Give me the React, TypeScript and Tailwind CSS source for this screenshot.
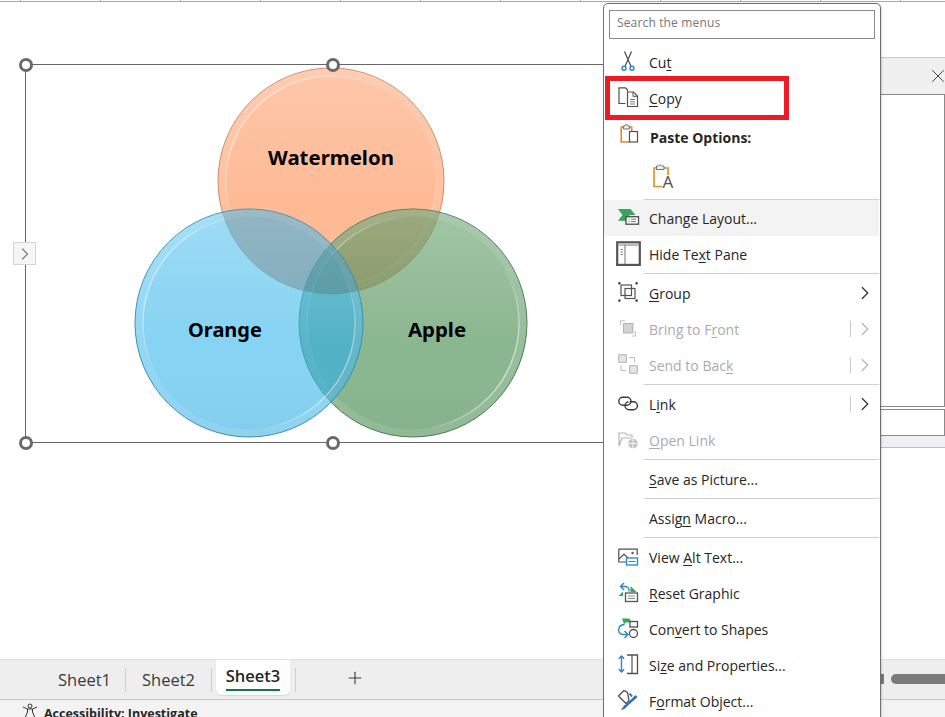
import React from "react";
import { X, Plus, ChevronRight } from "lucide-react";

type Item = {
  label?: string;
  icon?: React.ReactNode;
  off?: boolean;
  arrow?: boolean;
  split?: boolean;
  hover?: boolean;
  sep?: boolean;
};

const Svg = ({ children }: { children: React.ReactNode }) => (
  <svg className="w-6 h-6 shrink-0 overflow-visible" viewBox="0 0 24 24" fill="none">
    {children}
  </svg>
);

const CutIcon = () => (
  <Svg>
    <path d="M8.5 1.5 15 16.5M15.5 1.5 9 16.5" stroke="#4a4a4a" strokeWidth="1.2" />
    <circle cx="8" cy="18.3" r="2" stroke="#2a84d2" strokeWidth="1.4" />
    <circle cx="16" cy="18.3" r="2" stroke="#2a84d2" strokeWidth="1.4" />
  </Svg>
);

const CopyIcon = () => (
  <Svg>
    <path d="M9.5 17.5H3V1.800h6.500l2 2v1.700" stroke="#505050" strokeWidth="1.2" />
    <path d="M11.500 6h6l4 4v10.500h-10z" stroke="#505050" strokeWidth="1.2" fill="#fff" />
    <path d="M17 6v4.300h4.500" stroke="#505050" />
    <path d="M14 13.500h5M14 15.800h5M14 18h5" stroke="#808080" />
  </Svg>
);

const PasteIcon = () => (
  <Svg>
    <path d="M8 2H5.200v15h8M13 2h2.700v4" stroke="#e58a2c" strokeWidth="1.6" />
    <path d="M7.500 4V1H9a1.500 1.500 0 0 1 3 0h1.500v3z" stroke="#707070" fill="#eee" />
    <rect x="13.500" y="6.500" width="8" height="10.500" stroke="#505050" strokeWidth="1.2" fill="#fff" />
  </Svg>
);

const PasteTextIcon = () => (
  <Svg>
    <path d="M7 2H4v18.500h8M13 2h5v7" stroke="#e58a2c" strokeWidth="1.6" />
    <path d="M6.500 3.500V0h2a2 2 0 0 1 3.500 0h2v3.500z" stroke="#707070" fill="#eee" />
    <text x="12.500" y="22" fontSize="17" fill="#505050" className="font-['Open_Sans',sans-serif]">A</text>
  </Svg>
);

const LayoutIcon = () => (
  <Svg>
    <path d="M2 3h12.500l5 6h-6L12 14.700H2l4.500-5.800z" fill="#39a45a" />
    <rect x="10" y="10.700" width="12.500" height="7.500" fill="#fff" stroke="#555" strokeWidth="1.4" />
    <path d="M12.500 13.200h1.200M12.500 15.600h1.200M15 13.200h5M15 15.600h5" stroke="#777" />
  </Svg>
);

const PaneIcon = () => (
  <Svg>
    <rect x="1.200" y="0.300" width="22.600" height="22.600" fill="#fff" stroke="#555" strokeWidth="2.200" />
    <path d="M2.500 3h20" stroke="#aaa" strokeWidth="1.600" />
    <path d="M9 3v19" stroke="#777" />
    <path d="M4.500 7.500h2.500M4.500 10h2.500M4.500 12.500h2.500" stroke="#888" />
  </Svg>
);

const GroupIcon = () => (
  <Svg>
    <g fill="#333">
      <rect x="2.300" y="1.200" width="2.200" height="2.200" />
      <rect x="19.500" y="1.200" width="2.200" height="2.200" />
      <rect x="2.300" y="18.500" width="2.200" height="2.200" />
      <rect x="19.500" y="18.500" width="2.200" height="2.200" />
    </g>
    <rect x="5" y="4" width="10.500" height="10.500" stroke="#555" strokeWidth="1.200" />
    <rect x="9" y="7.500" width="10" height="10" stroke="#555" strokeWidth="1.200" />
  </Svg>
);

const FrontIcon = () => (
  <Svg>
    <path d="M4.500 8V3.800H9M15.500 19h4v-4.500" stroke="#bdbdbd" />
    <rect x="7.500" y="6.500" width="9.500" height="9.500" fill="#d2d2d2" stroke="#b5b5b5" />
  </Svg>
);

const BackIcon = () => (
  <Svg>
    <rect x="2.800" y="1.800" width="7.500" height="7.500" fill="#e6e6e6" stroke="#b0b0b0" />
    <rect x="13.700" y="12.700" width="7.500" height="7.500" fill="#e6e6e6" stroke="#b0b0b0" />
    <path d="M13 4.500h5.500v5M5 12v5.500h5" stroke="#bdbdbd" />
  </Svg>
);

const LinkIcon = () => (
  <Svg>
    <rect x="2.800" y="5.300" width="12.200" height="8" rx="4" stroke="#3a3a3a" strokeWidth="1.400" />
    <rect x="9" y="9.700" width="12.400" height="8" rx="4" stroke="#3a3a3a" strokeWidth="1.400" />
    <path d="M13 8.500v1.800" stroke="#fff" strokeWidth="1.600" />
  </Svg>
);

const OpenLinkIcon = () => (
  <Svg>
    <path d="M3 18V5h6l2 2h5v3M3 18l3-8h9" stroke="#b5b5b5" strokeWidth="1.200" />
    <circle cx="17" cy="15.500" r="4.800" fill="#c4c4c4" />
    <path d="M12.500 15.500h9M17 11v9" stroke="#fff" strokeWidth="0.800" />
  </Svg>
);

const AltIcon = () => (
  <Svg>
    <path d="M10 17H2.800V4.200h18.400V10" stroke="#505050" strokeWidth="1.200" />
    <path d="M3 14l5-5 6 6" stroke="#505050" strokeWidth="1.200" />
    <circle cx="16.500" cy="8" r="1.200" fill="#505050" />
    <rect x="10.500" y="13" width="11" height="7" fill="#fff" stroke="#2a84d2" strokeWidth="1.300" />
    <path d="M12.500 16.500h7" stroke="#2a84d2" />
  </Svg>
);

const ResetIcon = () => (
  <Svg>
    <path d="M8 2 4.500 5.500 8 9M5 5.500h4a4 4 0 0 1 4 4v1" stroke="#2a84d2" strokeWidth="1.400" />
    <path d="M2.500 15 7 10.500V15z" fill="#39a45a" />
    <path d="M14.500 5l6 6h-6z" fill="#39a45a" />
    <rect x="9.500" y="12" width="12" height="8.500" fill="#fff" stroke="#555" strokeWidth="1.300" />
    <path d="M12 15h7M12 17.500h7" stroke="#888" />
  </Svg>
);

const ConvertIcon = () => (
  <Svg>
    <path d="M6 1.500h7.500l2 4h-6l-1.500 2z" fill="#39a45a" />
    <rect x="14" y="4.500" width="7.500" height="5.500" fill="#fff" stroke="#505050" strokeWidth="1.300" />
    <circle cx="17.500" cy="16.500" r="4" fill="#fff" stroke="#505050" strokeWidth="1.300" />
    <path d="M8.500 7.500C1 8 1 17 7 17.500h4M8.500 14l3.500 3.500L8.500 21" stroke="#2a84d2" strokeWidth="1.400" />
  </Svg>
);

const SizeIcon = () => (
  <Svg>
    <path d="M5.500 3v16M2.800 5.800 5.500 3l2.700 2.800M2.800 16.200 5.500 19l2.700-2.800" stroke="#2a84d2" strokeWidth="1.400" />
    <path d="M11 2h10.500v18.500H11" stroke="#505050" strokeWidth="1.300" fill="#fff" />
    <path d="M16 2v18.500" stroke="#505050" strokeWidth="1.200" />
  </Svg>
);

const FormatIcon = () => (
  <Svg>
    <path d="M8 1.500 2.500 7l7.500 7.500 3-3-1.500-8z" stroke="#505050" strokeWidth="1.300" fill="#fff" />
    <path d="M13.500 4.500l2.500 3" stroke="#2a84d2" strokeWidth="2" />
    <path d="M21.500 8 12 16.500l-2 2c-1 1.500-3 2.500-5.500 2 2-1 2.500-2.500 3.500-4l2.500-1.500L19.500 6z" fill="#2a6fc0" />
  </Svg>
);

const items: Item[] = [
  { sep: true },
  { label: "Chan_ge Layout...", icon: <LayoutIcon />, hover: true },
  { label: "Hide Te_xt Pane", icon: <PaneIcon /> },
  { sep: true },
  { label: "_Group", icon: <GroupIcon />, arrow: true },
  { label: "Bring to F_ront", icon: <FrontIcon />, off: true, arrow: true, split: true },
  { label: "Send to Bac_k", icon: <BackIcon />, off: true, arrow: true, split: true },
  { sep: true },
  { label: "L_ink", icon: <LinkIcon />, arrow: true, split: true },
  { label: "_Open Link", icon: <OpenLinkIcon />, off: true },
  { sep: true },
  { label: "_Save as Picture..." },
  { sep: true },
  { label: "Assig_n Macro..." },
  { sep: true },
  { label: "View _Alt Text...", icon: <AltIcon /> },
  { label: "_Reset Graphic", icon: <ResetIcon /> },
  { label: "Con_vert to Shapes", icon: <ConvertIcon /> },
  { label: "Si_ze and Properties...", icon: <SizeIcon /> },
  { label: "F_ormat Object...", icon: <FormatIcon /> },
];

const Label = ({ text }: { text: string }) => {
  const [a, b] = text.split("_");
  return (
    <span>
      {a}
      <u className="underline-offset-2">{b[0]}</u>
      {b.slice(1)}
    </span>
  );
};

const Row = ({ item }: { item: Item }) => (
  <div
    className={`h-9 shrink-0 flex items-center mr-px ${item.hover ? "bg-[#f3f3f3]" : ""} ${
      item.off ? "text-[#ababab]" : "text-[#262626]"
    }`}
  >
    <div className="w-[45px] pl-3 shrink-0">{item.icon}</div>
    <Label text={item.label!} />
    {item.arrow && (
      <div className="ml-auto flex items-center pr-[3px]">
        {item.split && <div className="w-px h-4 bg-[#c8c8c8] mr-[3px]" />}
        <ChevronRight className={`w-[22px] h-[22px] ${item.off ? "text-[#b5b5b5]" : "text-[#333]"}`} strokeWidth={1.3} />
      </div>
    )}
  </div>
);

const ContextMenu = () => (
  <div className="absolute left-[603px] top-[3px] w-[278px] h-[730px] bg-white border border-[#707070] rounded-t-[5px] flex flex-col font-['Open_Sans',sans-serif] text-[14px] shadow-[1px_0_2px_rgba(0,0,0,0.15)]">
    <div className="mt-[6px] mx-[5px] mb-[5px] h-[29px] shrink-0 border border-[#8a8a8a] flex items-center pl-[7px] pb-[3px] text-[12px] tracking-[0.15px] text-[#767676]">
      Search the menus
    </div>
    <Row item={{ label: "Cu_t", icon: <CutIcon /> }} />
    <Row item={{ label: "_Copy", icon: <CopyIcon /> }} />
    <div className="h-[41px] shrink-0 flex items-center font-bold text-[#262626] pt-px">
      <div className="w-[46px] pl-3 shrink-0">
        <PasteIcon />
      </div>
      Paste Options:
    </div>
    <div className="h-[41px] shrink-0 pl-[46px] flex items-center">
      <PasteTextIcon />
    </div>
    {items.map((item, i) =>
      item.sep ? (
        <div key={i} className={`${i === 0 ? "h-[2px] items-end" : "h-[3px] items-center"} shrink-0 flex pl-10 mr-px`}>
          <div className="h-px w-full bg-[#d0d0d0]" />
        </div>
      ) : (
        <Row key={i} item={item} />
      )
    )}
    <div className="absolute left-[1px] top-[72px] w-[184px] h-[44px] border-[5px] border-[#ed1c24]" />
  </div>
);

const Bubble = ({ cx, cy, r, fill, rim, edge }: { cx: number; cy: number; r: number; fill: string; rim: string; edge: string }) => (
  <g>
    <circle cx={cx} cy={cy} r={r} fill={fill} fillOpacity="0.65" stroke={edge} strokeWidth="1" />
    <circle cx={cx} cy={cy} r={r} fill="url(#sheen)" />
    <circle cx={cx} cy={cy} r={r - 4} fill="none" stroke="#ffffff" strokeOpacity="0.1" strokeWidth="7" />
    <circle cx={cx} cy={cy} r={r - 8} fill="none" stroke={`url(#${rim})`} strokeWidth="1.4" />
  </g>
);

const Venn = () => (
  <svg className="absolute left-[-26px] top-[-65px] w-[620px] h-[460px] overflow-visible" viewBox="0 0 620 460">
    <defs>
      <linearGradient id="sheen" x1="0" y1="0" x2="0" y2="1">
        <stop offset="0" stopColor="#fff" stopOpacity="0.2" />
        <stop offset="0.6" stopColor="#fff" stopOpacity="0" />
        <stop offset="1" stopColor="#000" stopOpacity="0.03" />
      </linearGradient>
      <linearGradient id="rimA" x1="0" y1="0" x2="1" y2="1">
        <stop offset="0" stopColor="#fff" stopOpacity="0.85" />
        <stop offset="0.4" stopColor="#fff" stopOpacity="0" />
        <stop offset="0.7" stopColor="#fff" stopOpacity="0" />
        <stop offset="1" stopColor="#fff" stopOpacity="0.7" />
      </linearGradient>
      <linearGradient id="rimB" x1="0" y1="0.2" x2="1" y2="0.7">
        <stop offset="0" stopColor="#fff" stopOpacity="0.65" />
        <stop offset="0.3" stopColor="#fff" stopOpacity="0" />
        <stop offset="0.75" stopColor="#fff" stopOpacity="0" />
        <stop offset="1" stopColor="#fff" stopOpacity="0.65" />
      </linearGradient>
      <clipPath id="clipTop">
        <circle cx="331" cy="181" r="113" />
      </clipPath>
      <clipPath id="clipLeft">
        <circle cx="249" cy="323" r="114" />
      </clipPath>
    </defs>
    <Bubble cx={331} cy={181} r={113} fill="#fc955c" rim="rimA" edge="#c98a6a" />
    <Bubble cx={413} cy={323} r={114} fill="#4b9053" rim="rimB" edge="#4d7a55" />
    <Bubble cx={249} cy={323} r={114} fill="#45bced" rim="rimB" edge="#3f8fb0" />
    <g clipPath="url(#clipTop)">
      <circle cx="249" cy="323" r="114" fill="#5a5a5a" fillOpacity="0.16" />
      <circle cx="413" cy="323" r="114" fill="#6a5a30" fillOpacity="0.1" />
    </g>
    <g clipPath="url(#clipLeft)">
      <circle cx="413" cy="323" r="114" fill="#1c8aa5" fillOpacity="0.14" />
    </g>
    <g className="font-['Noto_Sans',sans-serif] font-bold" fill="#000" textAnchor="middle">
      <text x="331" y="165" fontSize="20.400">Watermelon</text>
      <text x="225" y="337" fontSize="20">Orange</text>
      <text x="437" y="337" fontSize="20.400">Apple</text>
    </g>
  </svg>
);

const Handle = ({ className }: { className: string }) => (
  <div className={`absolute w-[14px] h-[14px] rounded-full bg-white border-[3px] border-[#6a6a6a] ${className}`} />
);

const TaskPane = () => (
  <div className="w-[80px] shrink-0 mt-[55px] flex flex-col">
    <div className="h-[37px] bg-[#f0f0f0] border-t border-[#c8c8c8] flex items-center justify-end -mr-1">
      <X className="w-[22px] h-[22px] text-[#333]" strokeWidth={1} />
    </div>
    <div className="h-[313px] border-t border-b border-r border-[#8a8a8a] bg-white" />
    <div className="h-[27px] mt-[2px] border border-[#8a8a8a] bg-white" />
    <div className="h-[12px] bg-[#efeff4] border-b border-[#bdbdbd]" />
  </div>
);

export default function App() {
  return (
    <div className="relative w-[945px] h-[717px] overflow-hidden bg-white flex flex-col font-['Open_Sans',sans-serif]">
      <div className="h-[2px] shrink-0 flex border-b border-[#a8a8a8]">
        <div className="w-[21px] border-r border-[#a8a8a8]" />
        {Array.from({ length: 11 }).map((_, i) => (
          <div key={i} className="w-20 border-r border-[#a8a8a8]" />
        ))}
      </div>

      <div className="flex-1 flex justify-between">
        <div className="ml-[25px] mt-[62px] w-[600px] h-[379px] relative border border-[#666]">
          <Venn />
          <Handle className="left-[-7px] top-[-7px]" />
          <Handle className="left-[300px] top-[-7px]" />
          <Handle className="left-[-7px] bottom-[-8px]" />
          <Handle className="left-[300px] bottom-[-8px]" />
          <div className="absolute left-[-13px] top-[177px] w-[23px] h-[23px] bg-[#f6f6f6] border border-[#d4d4d4] flex items-center justify-center">
            <ChevronRight className="w-5 h-5 text-[#808080]" strokeWidth={1.5} />
          </div>
        </div>
        <TaskPane />
      </div>

      <div className="h-[41px] shrink-0 bg-[#eeeeee] border-t border-[#e0e0e0] border-b-[#c6c6c6] border-b flex items-start text-[16.5px] text-[#3a3a3a]">
        <div className="ml-[58px] mt-[8px]">Sheet1</div>
        <div className="w-px h-6 bg-[#cfcfcf] mt-[8px] ml-[14px]" />
        <div className="ml-[16px] mt-[8px]">Sheet2</div>
        <div className="w-px h-6 bg-[#cfcfcf] mt-[8px] ml-[16px]" />
        <div className="ml-[4px] w-[74px] h-[35px] bg-white rounded-b-md flex flex-col items-center font-semibold text-[#262626] shadow-[0_1px_1px_rgba(0,0,0,0.1)]">
          <div className="mt-[3px] leading-[26px]">Sheet3</div>
          <div className="w-[54px] h-[2px] bg-[#107c41]" />
        </div>
        <div className="w-px h-6 bg-[#cfcfcf] mt-[8px] ml-[5px]" />
        <Plus className="ml-[49px] mt-[8px] w-5 h-5 text-[#3a3a3a]" strokeWidth={1.3} />
        <div className="ml-auto flex mt-[14px] gap-[7px]">
          <div className="w-[3px] h-[10px] bg-[#7b7b7b]" />
          <div className="w-[54px] h-[10px] bg-[#7b7b7b] rounded-l-full" />
        </div>
      </div>

      <div className="h-[17px] shrink-0 bg-[#f3f3f3] flex items-start pl-[22px] overflow-hidden">
        <svg className="w-4 h-4 mt-[3px] shrink-0" viewBox="0 0 16 16" fill="none">
          <circle cx="8" cy="3" r="2" stroke="#333" />
          <path d="M1 4l4.500 2h5L15 4M5.500 6v3L3 15M10.500 6v3l2.500 6" stroke="#333" />
        </svg>
        <span className="ml-[6px] mt-[6px] text-[12.5px] leading-4 font-bold text-[#262626]">Accessibility: Investigate</span>
      </div>

      <ContextMenu />
    </div>
  );
}
